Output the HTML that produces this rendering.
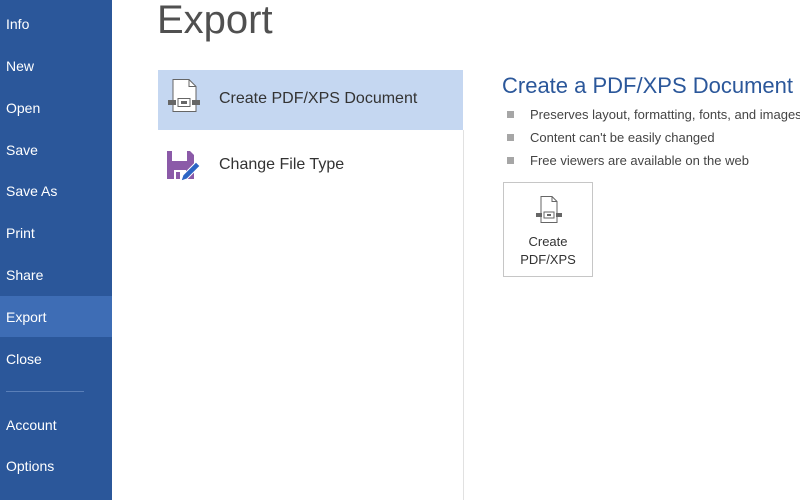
<!DOCTYPE html>
<html><head><style>
body{margin:0;width:800px;height:500px;overflow:hidden;background:#fff;font-family:"Liberation Sans",sans-serif;position:relative}
.sb{position:absolute;left:0;top:0;width:112px;height:500px;background:#2b579a}
.sb .m{position:absolute;left:6px;color:#fff;font-size:14px}
.hl{position:absolute;left:0;top:296px;width:112px;height:41px;background:#3e6db5}
.t{position:absolute;left:157px;top:-2px;font-size:40px;color:#505050;font-weight:300}
.sel{position:absolute;left:158px;top:70px;width:305px;height:60px;background:#c5d7f1}
.vl{position:absolute;left:463px;top:130px;width:1px;height:370px;background:#e1e1e1}
.it{position:absolute;left:219px;font-size:16px;color:#333}
.h{position:absolute;left:502px;top:73px;font-size:22px;color:#2b579a}
.b{position:absolute;left:530px;font-size:13px;color:#444;white-space:nowrap}
.sq{position:absolute;left:507px;width:7px;height:7px;background:#a6a6a6}
.btn{position:absolute;left:503px;top:182px;width:88px;height:93px;border:1px solid #c6c6c6;background:#fff}
.btn span{position:absolute;top:50px;width:88px;text-align:center;font-size:13px;color:#333;line-height:18px}
</style></head><body>
<div class="sb">
<div class="hl"></div>
<div class="m" style="top:16px">Info</div>
<div class="m" style="top:58px">New</div>
<div class="m" style="top:100px">Open</div>
<div class="m" style="top:142px">Save</div>
<div class="m" style="top:183px">Save As</div>
<div class="m" style="top:225px">Print</div>
<div class="m" style="top:267px">Share</div>
<div class="m" style="top:309px">Export</div>
<div class="m" style="top:351px">Close</div>
<div style="position:absolute;top:391px;left:6px;width:78px;height:1px;background:#5a7fb8"></div>
<div class="m" style="top:417px">Account</div>
<div class="m" style="top:458px">Options</div>
</div>
<div class="t">Export</div>
<div class="sel"></div>
<div class="vl"></div>
<svg style="position:absolute;left:168px;top:78px" width="32" height="36" viewBox="0 0 32 36"><path d="M5 1.5H21L28 8.5V33.5H5Z" fill="#fff" stroke="#666"/><path d="M21 1.5V8.5H28" fill="none" stroke="#666"/><rect x="0" y="22" width="8" height="5" fill="#666"/><rect x="10" y="20.5" width="12" height="8" fill="#fff" stroke="#666"/><rect x="13" y="23" width="6" height="3" fill="#666"/><rect x="24" y="22" width="8" height="5" fill="#666"/></svg>
<div class="it" style="top:90px">Create PDF/XPS Document</div>
<svg style="position:absolute;left:166px;top:150px" width="36" height="32" viewBox="0 0 36 32"><path d="M1 1H24L28 5V29H1Z" fill="#8b5aa8"/><rect x="6" y="1" width="15" height="10" fill="#fff"/><rect x="8" y="20" width="12" height="9" fill="#fff"/><rect x="10" y="22" width="4" height="7" fill="#8b5aa8"/><path d="M15 31L17 25L30 12L34 16L21 29Z" fill="#2b64c4" stroke="#fff" stroke-width="1"/></svg>
<div class="it" style="top:156px">Change File Type</div>
<div class="h">Create a PDF/XPS Document</div>
<div class="sq" style="top:111px"></div><div class="b" style="top:107px">Preserves layout, formatting, fonts, and images</div>
<div class="sq" style="top:134px"></div><div class="b" style="top:130px">Content can't be easily changed</div>
<div class="sq" style="top:157px"></div><div class="b" style="top:153px">Free viewers are available on the web</div>
<div class="btn">
<svg style="position:absolute;left:32px;top:12px" width="26" height="30" viewBox="0 0 26 30"><path d="M5 1.5H16L21 6.5V27.5H5Z" fill="#fff" stroke="#666"/><path d="M16 1.5V6.5H21" fill="none" stroke="#666"/><rect x="0" y="18" width="6" height="4" fill="#666"/><rect x="8" y="17" width="10" height="6" fill="#fff" stroke="#666"/><rect x="11" y="19" width="4" height="2" fill="#666"/><rect x="20" y="18" width="6" height="4" fill="#666"/></svg>
<span>Create<br>PDF/XPS</span></div>
</body></html>
